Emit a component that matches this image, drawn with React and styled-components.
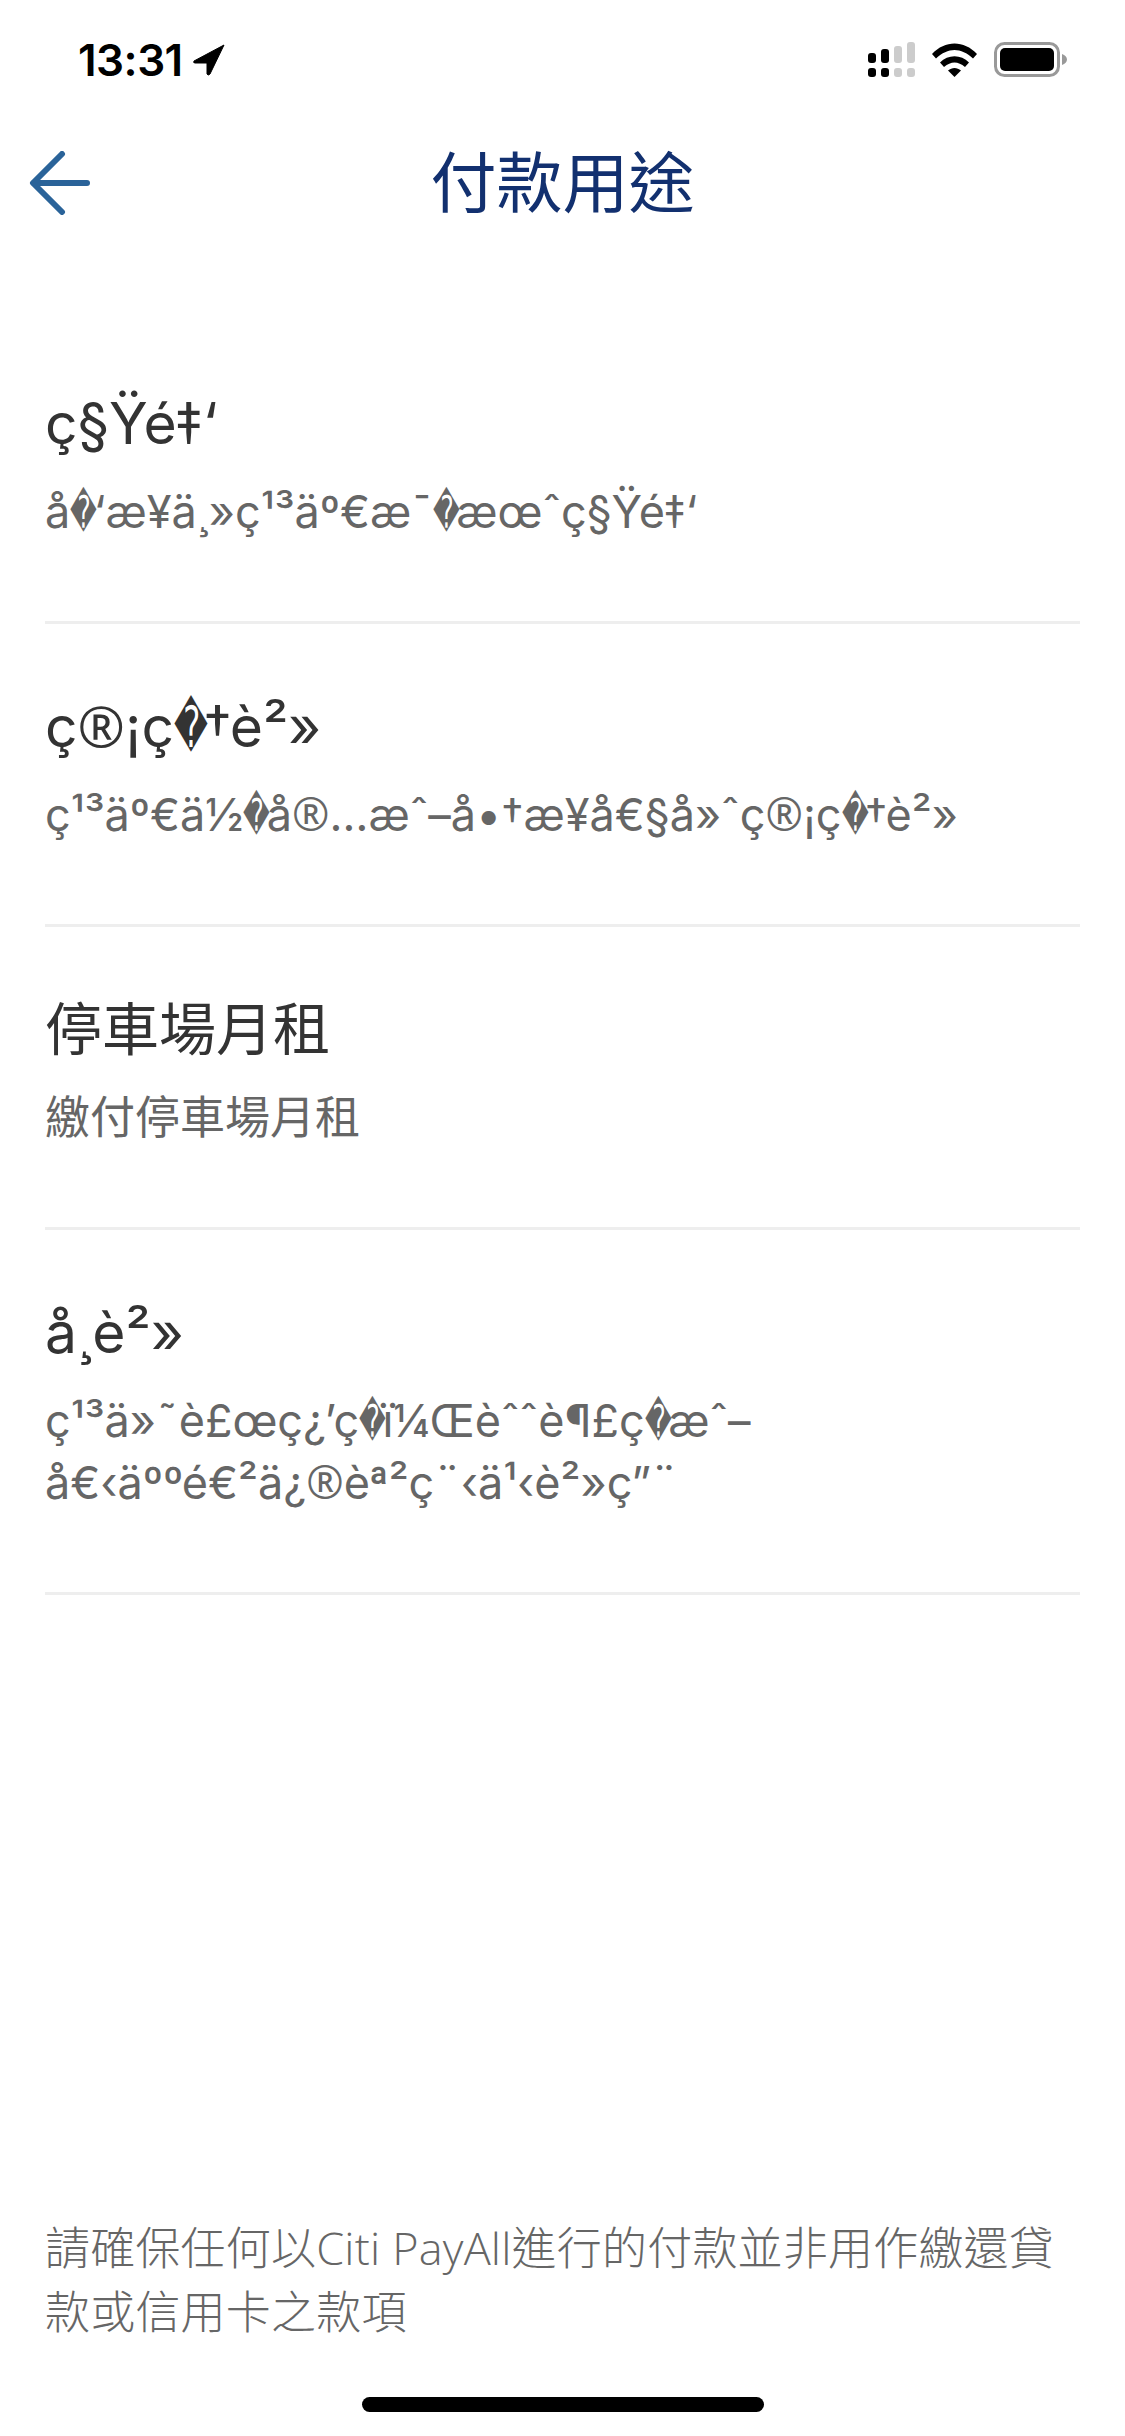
import styled, { createGlobalStyle } from "styled-components"

const GlobalStyle = createGlobalStyle`
    html, body {
        margin: 0;
        padding: 0;
        background: #fff;
    }
`;

const Page = styled.div`
    width: 1125px;
    height: 2436px;
    display: flex;
    flex-direction: column;
    background: #fff;
    font-family: Inter, "Noto Sans CJK TC", "DejaVu Sans", sans-serif;
    overflow: hidden;
`;

const StatusBar = styled.div`
    height: 120px;
    padding: 38px 57px 0 78px;
    box-sizing: border-box;
    display: flex;
    justify-content: space-between;
    align-items: flex-start;
`;

const TimeWrap = styled.div`
    display: flex;
    align-items: center;
    gap: 10px;
`;

const Time = styled.span`
    font-family: Inter, "Liberation Sans", sans-serif;
    font-size: 44px;
    line-height: 44px;
    font-weight: 600;
    letter-spacing: -0.5px;
    color: #000;
`;

const StatusIcons = styled.div`
    display: flex;
    align-items: center;
    gap: 17px;
    height: 44px;
`;

const NavBar = styled.div`
    height: 126px;
    display: grid;
    grid-template-columns: 1fr auto 1fr;
    align-items: center;
`;

const BackButton = styled.div`
    padding-left: 29px;
    display: flex;
    align-items: center;
`;

const Title = styled.h1`
    margin: -10px 0 0;
    font-family: "Noto Sans CJK TC", sans-serif;
    font-size: 66px;
    line-height: 80px;
    font-weight: 400;
    color: #12306f;
`;

const List = styled.div`
    margin-top: 75px;
    padding: 0 45px;
`;

const Row = styled.div`
    padding: 63px 0 78px;
    border-bottom: 3px solid #eeeeee;
`;

const RowTitle = styled.div`
    font-size: 57px;
    line-height: 80px;
    color: #333333;
`;

const RowText = styled.div`
    margin-top: 17px;
    font-size: 45px;
    line-height: 62px;
    color: #666666;
`;

const RowLine = styled.div`
    white-space: nowrap;
`;

// the replacement char is a tall narrow diamond in the app font
const BadChar = styled.span`
    display: inline-block;
    width: 0.52em;
    line-height: 0;
    font-family: "DejaVu Sans", sans-serif;
    transform: scaleX(0.58);
    transform-origin: left center;
`;

const RoundMark = styled.span`
    line-height: 0;
    font-family: "Open Sans", sans-serif;
`;

const Footer = styled.div`
    margin-top: auto;
    padding: 0 45px;
    font-family: "Open Sans", "Noto Sans CJK TC", sans-serif;
    font-size: 45px;
    line-height: 64px;
    font-weight: 300;
    letter-spacing: 0.2px;
    color: #666666;
`;

const HomeBarWrap = styled.div`
    display: flex;
    justify-content: center;
    padding: 53px 0 24px;
`;

const HomeBar = styled.div`
    width: 402px;
    height: 15px;
    border-radius: 8px;
    background: #000;
`;

const rows = [
    {
        title: "ç§Ÿé‡‘",
        lines: ["å\uFFFD‘æ¥\u00ADä¸»ç¹³äº€æ¯\uFFFDæœˆç§Ÿé‡‘"]
    },
    {
        title: "ç®¡ç\uFFFD†è²»",
        lines: ["ç¹³äº€ä½\uFFFDå®…æˆ–å•†æ¥\u00ADå€§å»ˆç®¡ç\uFFFD†è²»"]
    },
    {
        title: "停車場月租",
        lines: ["繳付停車場月租"]
    },
    {
        title: "å\u00AD¸è²»",
        lines: ["ç¹³ä»˜è£œç¿’ç\uFFFDï¼Œèˆˆè¶£ç\uFFFDæˆ–", "å€‹äººé€²ä¿®èª²ç¨‹ä¹‹è²»ç”¨"]
    }
];

const renderText = (text) => {
    return text.split(/([\uFFFD®])/).map((part, index) => {
        if (part === "\uFFFD") return <BadChar key={index}>{part}</BadChar>
        if (part === "®") return <RoundMark key={index}>{part}</RoundMark>
        return part
    })
}

const LocationArrow = () => (
    <svg width="32" height="32" viewBox="0 0 32 32">
        <path d="M31 1 L1 17 Q0 19 2 19 L14 19 L14 30 Q15 32 17 30 Z" fill="#000" stroke="#000" strokeWidth="1" strokeLinejoin="round" />
    </svg>
);

const Signal = () => (
    <svg width="47" height="36" viewBox="0 0 47 36">
        <rect x="0" y="11" width="8" height="10" rx="3" fill="#000" />
        <rect x="13" y="7" width="8" height="14" rx="3" fill="#000" />
        <rect x="26" y="4" width="8" height="17" rx="3" fill="#cccccc" />
        <rect x="39" y="0" width="8" height="21" rx="3" fill="#cccccc" />
        <rect x="0" y="26" width="8" height="9" rx="3" fill="#000" />
        <rect x="13" y="26" width="8" height="9" rx="3" fill="#000" />
        <rect x="26" y="26" width="8" height="9" rx="3" fill="#cccccc" />
        <rect x="39" y="26" width="8" height="9" rx="3" fill="#cccccc" />
    </svg>
);

const Wifi = () => (
    <svg width="45" height="34" viewBox="0 0 45 34">
        <path d="M0 11 C13 -3 32 -3 45 11 L41 15.5 C29 4 16 4 4 15.5 Z" fill="#000" />
        <path d="M8 19.5 C16 11 29 11 37 19.5 L33 24 C26 18 19 18 12 24 Z" fill="#000" />
        <path d="M16 27.5 C20 24 25 24 29 27.5 L22.5 34 Z" fill="#000" />
    </svg>
);

const Battery = () => (
    <svg width="74" height="36" viewBox="0 0 74 36">
        <rect x="1.5" y="1.5" width="63" height="32" rx="9" fill="none" stroke="#999999" strokeWidth="3" />
        <rect x="6" y="6" width="54" height="23" rx="5" fill="#000" />
        <path d="M68 12 C71 13 73 15 73 17.5 C73 20 71 22 68 23 Z" fill="#999999" />
    </svg>
);

const BackArrow = () => (
    <svg width="64" height="64" viewBox="0 0 64 64" fill="none" stroke="#2a6399" strokeWidth="6" strokeLinecap="round" strokeLinejoin="round">
        <path d="M33 3 L4 32 L33 61" />
        <path d="M5 32 L58 32" />
    </svg>
);

const App = () => {
    return (
        <Page>
            <GlobalStyle />
            <StatusBar>
                <TimeWrap>
                    <Time>13:31</Time>
                    <LocationArrow />
                </TimeWrap>
                <StatusIcons>
                    <Signal />
                    <Wifi />
                    <Battery />
                </StatusIcons>
            </StatusBar>

            <NavBar>
                <BackButton>
                    <BackArrow />
                </BackButton>
                <Title>付款用途</Title>
            </NavBar>

            <List>
                {rows.map((row, index) => {
                    return (
                        <Row key={index}>
                            <RowTitle>{renderText(row.title)}</RowTitle>
                            <RowText>
                                {row.lines.map((line, lineIndex) => {
                                    return <RowLine key={lineIndex}>{renderText(line)}</RowLine>
                                })}
                            </RowText>
                        </Row>
                    )
                })}
            </List>

            <Footer>請確保任何以Citi PayAll進行的付款並非用作繳還貸款或信用卡之款項</Footer>
            <HomeBarWrap>
                <HomeBar />
            </HomeBarWrap>
        </Page>
    );
}

export default App;
